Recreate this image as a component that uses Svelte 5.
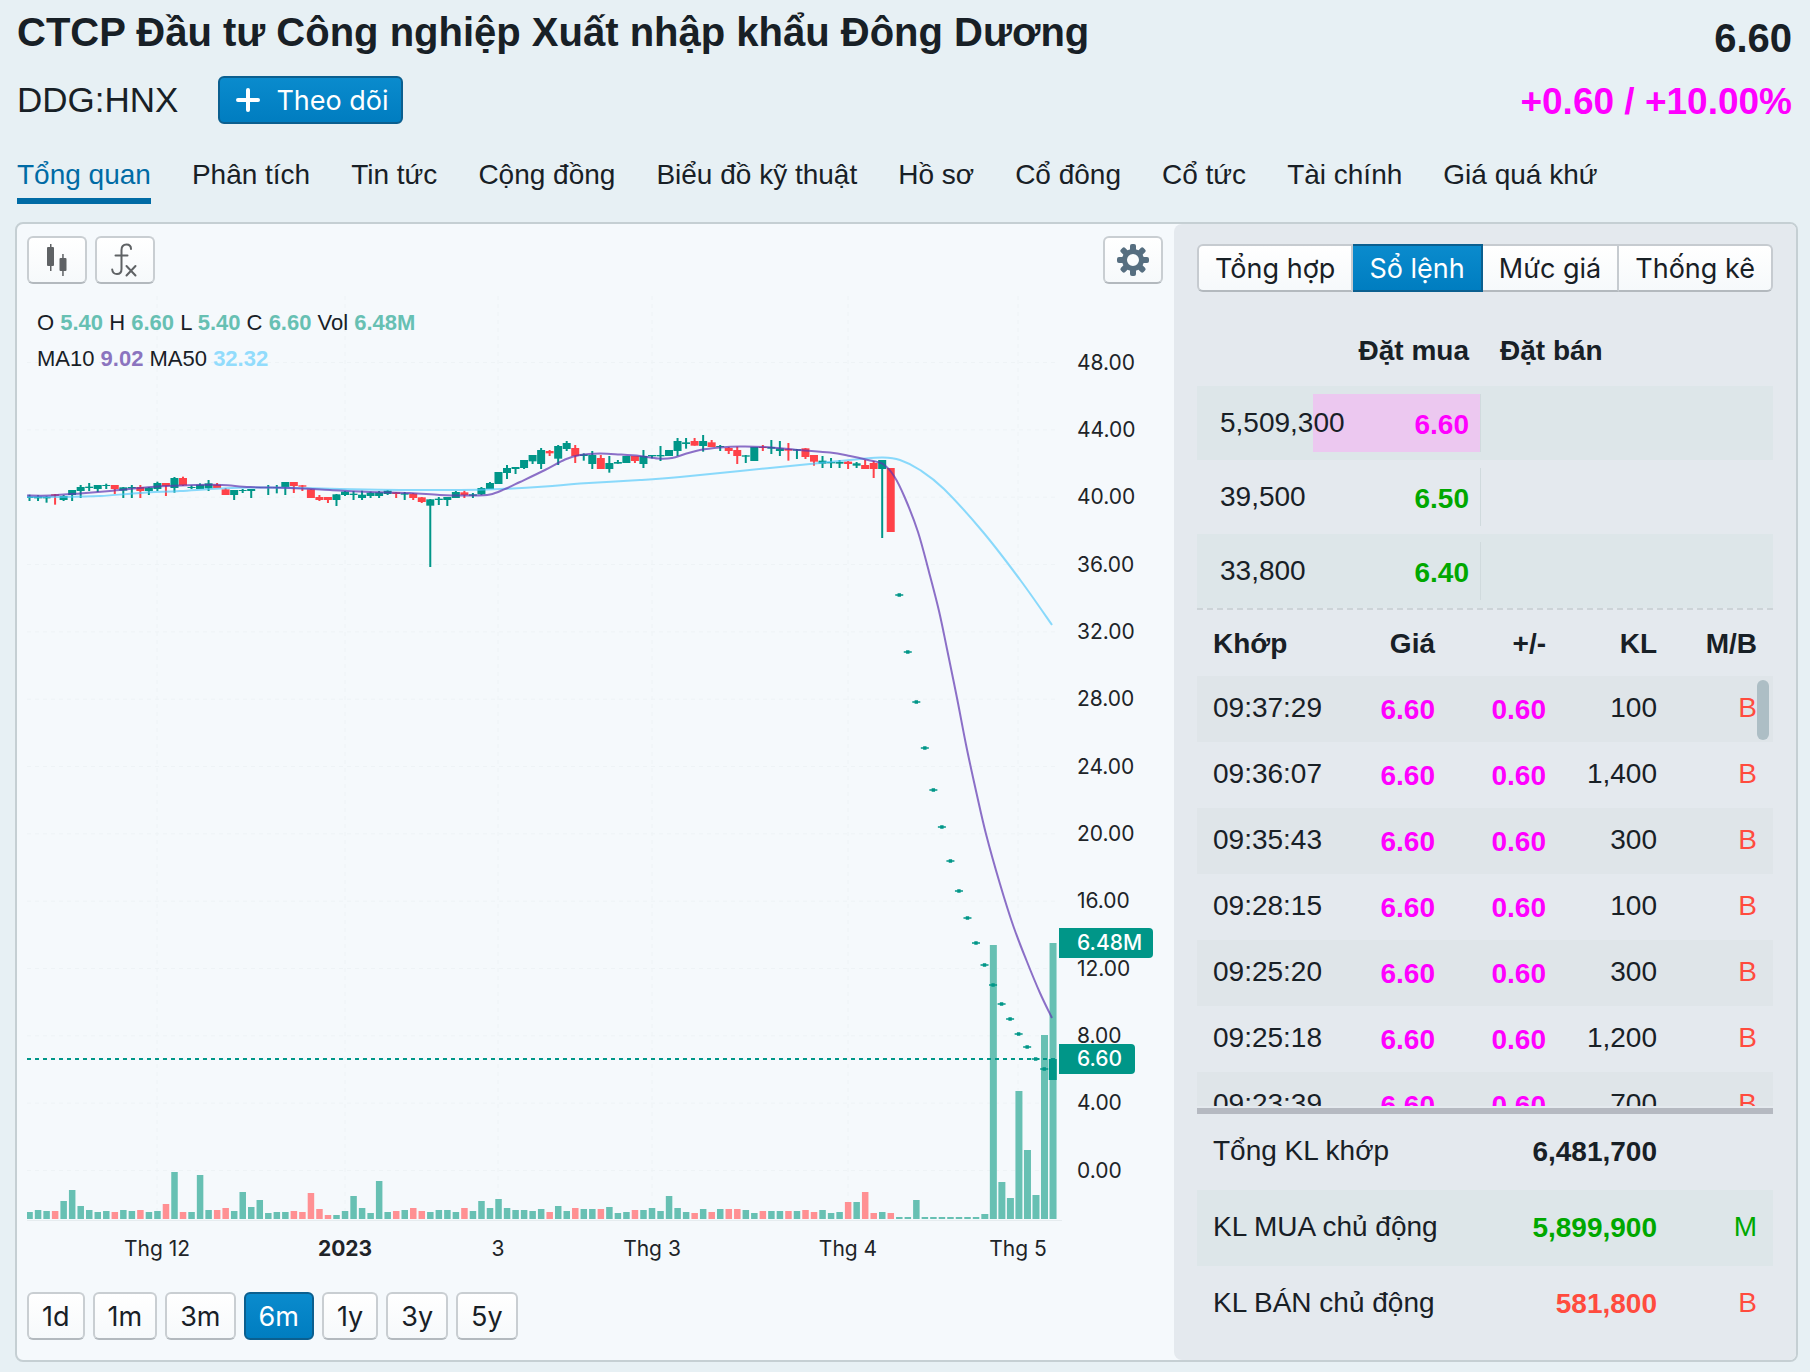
<script>
  const tabs = ['Tổng quan', 'Phân tích', 'Tin tức', 'Cộng đồng', 'Biểu đồ kỹ thuật', 'Hồ sơ', 'Cổ đông', 'Cổ tức', 'Tài chính', 'Giá quá khứ'];
  const periods = ['1d', '1m', '3m', '6m', '1y', '3y', '5y'];
  const views = ['Tổng hợp', 'Sổ lệnh', 'Mức giá', 'Thống kê'];

  let activeTab = $state('Tổng quan');
  let activePeriod = $state('6m');
  let activeView = $state('Sổ lệnh');

  const bids = [
    { volume: '5,509,300', price: '6.60', tone: 'ceil', share: 59 },
    { volume: '39,500', price: '6.50', tone: 'up', share: 0 },
    { volume: '33,800', price: '6.40', tone: 'up', share: 0 }
  ];

  const trades = [
    ['09:37:29', '100'],
    ['09:36:07', '1,400'],
    ['09:35:43', '300'],
    ['09:28:15', '100'],
    ['09:25:20', '300'],
    ['09:25:18', '1,200'],
    ['09:23:39', '700']
  ];

  const totals = [
    { label: 'Tổng KL khớp', value: '6,481,700', side: '', tone: '' },
    { label: 'KL MUA chủ động', value: '5,899,900', side: 'M', tone: 'up' },
    { label: 'KL BÁN chủ động', value: '581,800', side: 'B', tone: 'down' }
  ];

  // Chart geometry: one session every `step` units, starting at `x0`.
  const x0 = 29.5;
  const step = 8.527;
  const cx = (i) => x0 + i * step;
  const yOf = (price) => 1170.5 - price * 16.833;

  const priceTicks = [48, 44, 40, 36, 32, 28, 24, 20, 16, 12, 8, 4, 0];
  const timeTicks = [
    { x: 157, label: 'Thg 12' },
    { x: 345, label: '2023', strong: true },
    { x: 498, label: '3' },
    { x: 652, label: 'Thg 3' },
    { x: 848, label: 'Thg 4' },
    { x: 1018, label: 'Thg 5' }
  ];

  // Sessions that closed lower; all the others closed higher.
  const falling = new Set([3, 10, 13, 16, 18, 22, 23, 31, 32, 33, 34, 35, 43, 45, 46, 51, 61, 64, 67, 71, 78, 80, 82, 83, 86, 89, 91, 92, 96, 98, 99, 101]);

  const volumes = [
    7, 9, 8, 8, 18, 29, 13, 9, 7, 8, 7, 9, 8, 9, 7, 8, 15, 47, 7, 7, 44, 9, 9, 11, 8, 27, 12, 19, 6, 7, 7, 8, 7, 26, 10, 4, 4, 8, 23, 11,
    6, 38, 7, 8, 9, 11, 8, 7, 9, 9, 7, 11, 8, 18, 11, 20, 11, 9, 9, 8, 10, 7, 13, 8, 11, 10, 10, 10, 12, 6, 7, 9, 9, 11, 8, 23, 11, 7, 6, 10,
    7, 10, 10, 10, 9, 6, 8, 8, 8, 8, 8, 9, 7, 9, 6, 7, 17, 17, 27, 6, 7, 6, 2, 2, 19, 2, 2, 2, 2, 2, 2, 2, 5, 274, 37, 21, 128, 69, 24, 184, 276
  ];

  // Wick top, body top, body bottom, wick bottom, in thirds of a unit below y = 440.
  const sessions = [
    [164, 170, 174, 183], [166, 170, 175, 183], [168, 171, 175, 188], [162, 163, 167, 194], [165, 168, 180, 183],
    [150, 150, 165, 183], [135, 141, 153, 174], [129, 140, 144, 153], [135, 135, 147, 156], [131, 135, 138, 147],
    [135, 135, 147, 162], [141, 142, 152, 174], [135, 141, 145, 174], [135, 141, 153, 174], [141, 143, 153, 165],
    [125, 129, 147, 153], [129, 129, 138, 168], [111, 114, 144, 158], [110, 114, 136, 138], [136, 141, 144, 147],
    [130, 134, 147, 147], [120, 130, 145, 153], [129, 134, 144, 144], [144, 148, 165, 165], [150, 150, 165, 180],
    [147, 150, 153, 159], [147, 147, 153, 174], [141, 142, 144, 144], [135, 142, 144, 165], [135, 141, 144, 160],
    [126, 126, 141, 165], [126, 126, 138, 159], [135, 136, 140, 153], [147, 148, 174, 174], [165, 171, 180, 183],
    [171, 171, 180, 189], [162, 163, 180, 198], [153, 155, 165, 168], [153, 161, 165, 180], [152, 164, 174, 180],
    [155, 158, 168, 174], [153, 157, 168, 174], [150, 152, 162, 165], [156, 157, 162, 174], [156, 160, 164, 180],
    [159, 161, 174, 180], [171, 172, 186, 189], [177, 178, 197, 381], [171, 176, 180, 195], [171, 171, 180, 198],
    [153, 156, 174, 174], [152, 157, 165, 174], [159, 163, 167, 174], [141, 144, 163, 165], [126, 129, 147, 147],
    [96, 96, 132, 132], [75, 84, 99, 117], [81, 81, 87, 102], [60, 60, 84, 87], [45, 45, 64, 72],
    [24, 30, 72, 87], [30, 33, 40, 48], [15, 18, 56, 75], [3, 9, 27, 33], [15, 24, 48, 69],
    [40, 43, 48, 62], [33, 45, 72, 87], [45, 54, 87, 87], [48, 69, 87, 98], [60, 66, 71, 71],
    [48, 48, 69, 69], [48, 48, 63, 69], [30, 48, 72, 84], [45, 45, 49, 55], [18, 45, 49, 63],
    [30, 30, 48, 48], [-6, 3, 33, 48], [-6, 7, 12, 26], [-6, 3, 17, 17], [-15, 3, 18, 35],
    [0, 7, 21, 21], [15, 18, 21, 33], [21, 24, 33, 42], [20, 30, 48, 72], [45, 46, 50, 69],
    [21, 21, 63, 63], [15, 21, 24, 33], [0, 21, 26, 42], [3, 25, 33, 48], [9, 27, 32, 62],
    [27, 28, 32, 57], [24, 25, 51, 57], [45, 45, 65, 77], [48, 62, 71, 84], [54, 66, 70, 84],
    [60, 66, 71, 84], [63, 65, 72, 87], [66, 70, 77, 84], [60, 75, 87, 87], [63, 69, 87, 114],
    [60, 60, 87, 294], [84, 84, 276, 276]
  ];

  // Limit-move sessions with a single traded price, starting at session 102.
  const flats = [595, 652, 702, 748, 790, 827, 861, 891, 918, 943, 965, 985, 1004, 1019, 1034, 1047, 1059, 1069];

  const candles = sessions.map(([wt, bt, bb, wb], i) => ({
    x: cx(i), wt: 440 + wt / 3, bt: 440 + bt / 3, bb: 440 + bb / 3, wb: 440 + wb / 3, down: falling.has(i)
  }));

  const ma10 = [[27, 495.5], [50, 495.5], [80, 493.5], [110, 491], [140, 488], [167, 486], [195, 485], [222, 485], [250, 487], [290, 488], [330, 490], [370, 492], [410, 493], [440, 495], [470, 495.5], [490, 494.5], [505, 489], [520, 482], [545, 470], [565, 459.5], [580, 455], [600, 453.5], [620, 454.5], [640, 456], [658, 458.5], [672, 458], [685, 454], [700, 450], [720, 447.5], [740, 446.5], [765, 447], [800, 450], [830, 452.5], [850, 456], [868, 460], [883, 464], [894, 476], [905, 498], [918, 532], [929, 572], [939, 611], [947, 649], [957, 698], [966.7, 748], [976.7, 794], [986, 834], [1000, 884], [1013.3, 926], [1026.7, 961], [1040, 993], [1052, 1018]];
  const ma50 = [[27, 497], [60, 497], [100, 496], [140, 493], [180, 491], [220, 488.5], [260, 487.5], [300, 488], [340, 489], [400, 490], [460, 490], [500, 489], [545, 486.5], [580, 483.5], [640, 480], [680, 477], [740, 471], [780, 467], [820, 463], [860, 459], [883, 457.5], [900, 460], [920, 470], [944, 489], [983, 532], [1021, 581], [1052, 625]];

  // Catmull-Rom spline through the given points.
  function smooth(points) {
    let d = `M${points[0][0]} ${points[0][1]}`;
    for (let i = 0; i < points.length - 1; i++) {
      const a = points[i - 1] ?? points[i];
      const b = points[i];
      const c = points[i + 1];
      const e = points[i + 2] ?? c;
      d += ` C${b[0] + (c[0] - a[0]) / 6} ${b[1] + (c[1] - a[1]) / 6} ${c[0] - (e[0] - b[0]) / 6} ${c[1] - (e[1] - b[1]) / 6} ${c[0]} ${c[1]}`;
    }
    return d;
  }
</script>

<div class="page">
  <header class="head">
    <div>
      <h1>CTCP Đầu tư Công nghiệp Xuất nhập khẩu Đông Dương</h1>
      <div class="ticker-row">
        <span class="ticker">DDG:HNX</span>
        <button class="btn primary follow" type="button">
          <svg viewBox="0 0 24 24" width="24" height="24" aria-hidden="true"><path d="M12 2v20M2 12h20" /></svg>
          Theo dõi
        </button>
      </div>
    </div>
    <div class="quote">
      <div class="last">6.60</div>
      <div class="change">+0.60 / +10.00%</div>
    </div>
  </header>

  <nav class="tabs">
    {#each tabs as tab}
      <a href="#{tab}" class:active={tab === activeTab} onclick={() => (activeTab = tab)}>{tab}</a>
    {/each}
  </nav>

  <main class="panel">
    <section class="chart">
      <div class="toolbar">
        <button class="btn tool" type="button" aria-label="Kiểu biểu đồ">
          <svg viewBox="0 0 32 36" width="32" height="36" aria-hidden="true">
            <g fill="#5f6265">
              <rect x="6" y="5" width="7" height="19" rx="1" /><rect x="9" y="2" width="1.5" height="27" />
              <rect x="18.500" y="16" width="7" height="13" rx="1" /><rect x="21.200" y="12" width="1.500" height="22" />
            </g>
          </svg>
        </button>
        <button class="btn tool" type="button" aria-label="Chỉ báo">
          <svg viewBox="0 0 32 36" width="32" height="36" aria-hidden="true">
            <g fill="none" stroke="#5f6265" stroke-width="2" stroke-linecap="round">
              <path d="M22 7C22 4 20.500 2.500 17.500 2.500C14 2.500 12.500 5 12.500 8V27C12.500 30.500 11 32 8 32C5 32 3.500 30.500 3.200 27.500" />
              <path d="M6.500 13.500H18.500M17.500 24L26.500 33.500M26.500 24L17.500 33.500" />
            </g>
          </svg>
        </button>
        <button class="btn tool settings" type="button" aria-label="Cài đặt">
          <svg viewBox="-18 -18 36 36" width="36" height="36" aria-hidden="true">
            <g fill="#566e80">
              {#each [0, 45, 90, 135] as angle}
                <rect x="-3" y="-16" width="6" height="9" rx="2" transform="rotate({angle})" />
                <rect x="-3" y="7" width="6" height="9" rx="2" transform="rotate({angle})" />
              {/each}
            </g>
            <circle r="8.500" fill="none" stroke="#566e80" stroke-width="5" />
          </svg>
        </button>
      </div>

      <div class="plot">
        <svg class="graph" viewBox="27 292 1147 984" role="img" aria-label="Biểu đồ giá DDG">
          <g class="grid">
            {#each priceTicks as tick}
              <path d="M27 {yOf(tick)}H1058" />
            {/each}
            {#each timeTicks as tick}
              <path d="M{tick.x} 296V1219" />
            {/each}
          </g>
          <path d="M27 1220.500H1062" stroke="#e6ecef" />

          {#each volumes as height, i}
            <rect x={cx(i) - 3.2} y={1219 - height} width={i > 111 ? 7 : 6.5} {height} class={falling.has(i) ? 'vol-down' : 'vol-up'} />
          {/each}

          {#each candles as c}
            <g class={c.down ? 'fall' : 'rise'}>
              <rect x={c.x - 1} y={c.wt} width="2" height={c.wb - c.wt} />
              <rect x={c.x - 4} y={c.bt} width="8" height={c.bb - c.bt} />
            </g>
          {/each}
          {#each flats as y, i}
            <path class="rise" d="M{cx(102 + i) - 4} {y - 0.7}h2.300v-1h3.400v1h2.300v1.400h-2.300v1h-3.400v-1h-2.300z" />
          {/each}
          <rect class="rise" x={cx(120) - 4} y="1059" width="8" height="21" />

          <path class="ma ma50" d={smooth(ma50)} />
          <path class="ma ma10" d={smooth(ma10)} />
          <path d="M27 1059H1059" stroke="#009688" stroke-width="2" stroke-dasharray="4 4" />

          <g class="axis">
            {#each priceTicks as tick}
              <text x="1077" y={yOf(tick) + 7}>{tick.toFixed(2)}</text>
            {/each}
            {#each timeTicks as tick}
              <text x={tick.x} y="1256" text-anchor="middle" class:strong={tick.strong}>{tick.label}</text>
            {/each}
          </g>
          <g class="tag">
            <path d="M1059 928h90a4 4 0 0 1 4 4v22a4 4 0 0 1-4 4h-90z" />
            <text x="1077" y="950">6.48M</text>
            <path d="M1059 1044h72a4 4 0 0 1 4 4v22a4 4 0 0 1-4 4h-72z" />
            <text x="1077" y="1066">6.60</text>
          </g>
        </svg>
        <div class="legend">
          <div>O <b>5.40</b> H <b>6.60</b> L <b>5.40</b> C <b>6.60</b> Vol <b>6.48M</b></div>
          <div>MA10 <b class="l10">9.02</b> MA50 <b class="l50">32.32</b></div>
        </div>
      </div>

      <div class="periods">
        {#each periods as period}
          <button type="button" class="btn period" class:primary={period === activePeriod} onclick={() => (activePeriod = period)}>{period}</button>
        {/each}
      </div>
    </section>

    <aside class="side">
      <div class="segments">
        {#each views as view}
          <button type="button" class:active={view === activeView} onclick={() => (activeView = view)}>{view}</button>
        {/each}
      </div>

      <div class="book-head"><span>Đặt mua</span><span>Đặt bán</span></div>
      <div class="book">
        {#each bids as bid}
          <div class="book-row">
            <div class="bid">
              {#if bid.share}<i class="depth" style="width: {bid.share}%"></i>{/if}
              <span>{bid.volume}</span>
              <b class="num {bid.tone}">{bid.price}</b>
            </div>
          </div>
        {/each}
      </div>

      <div class="trades">
        <table>
          <thead>
            <tr><th>Khớp</th><th>Giá</th><th>+/-</th><th>KL</th><th>M/B</th></tr>
          </thead>
          <tbody>
            {#each trades as [time, volume]}
              <tr>
                <td>{time}</td>
                <td class="num ceil">6.60</td>
                <td class="num ceil">0.60</td>
                <td>{volume}</td>
                <td class="down">B</td>
              </tr>
            {/each}
          </tbody>
        </table>
        <span class="thumb"></span>
      </div>

      <table class="totals">
        <tbody>
          {#each totals as row}
            <tr>
              <td>{row.label}</td>
              <td class="num {row.tone}">{row.value}</td>
              <td class={row.tone}>{row.side}</td>
            </tr>
          {/each}
        </tbody>
      </table>
    </aside>
  </main>
</div>

<style>
  :global(body) {
    margin: 0;
    background: #e7f0f4;
  }

  .page {
    box-sizing: border-box;
    padding: 0 12px 10px 15px;
    font-family: 'Liberation Sans', Arial, sans-serif;
    font-size: 28px;
    color: #182026;
  }

  .head {
    display: flex;
    justify-content: space-between;
    padding: 0 6px 0 2px;
  }

  h1 {
    margin: 0;
    font-size: 40px;
    line-height: 64px;
  }

  .ticker-row {
    display: flex;
    align-items: center;
    gap: 40px;
    height: 72px;
  }

  .ticker {
    font-size: 35px;
  }

  .quote {
    text-align: right;
    font-weight: bold;
    white-space: nowrap;
  }

  .last {
    font-size: 40px;
    line-height: 76px;
  }

  .change {
    font-size: 37px;
    line-height: 52px;
    color: #ff00ff;
  }

  .btn {
    box-sizing: border-box;
    display: inline-flex;
    align-items: center;
    justify-content: center;
    height: 48px;
    margin: 0;
    padding: 0;
    border: 2px solid #c9ced2;
    border-bottom-color: #b3b9be;
    border-radius: 6px;
    background: linear-gradient(#ffffff, #f6f9fb);
    color: #182026;
    font-family: Inter, sans-serif;
    font-size: 27px;
  }

  .primary {
    border-color: #0b5f8f;
    background: linear-gradient(#0a8bcd, #007dc0);
    color: #ffffff;
  }

  .follow {
    gap: 16px;
    padding: 0 12px 0 16px;
  }

  .follow path {
    fill: none;
    stroke: #ffffff;
    stroke-width: 4;
    stroke-linecap: round;
  }

  .tabs {
    display: flex;
    gap: 41px;
    padding: 17px 2px 18px;
  }

  .tabs a {
    padding-bottom: 1px;
    border-bottom: 6px solid transparent;
    color: inherit;
    line-height: 44px;
    text-decoration: none;
    white-space: nowrap;
  }

  .tabs .active {
    border-color: #006ba5;
    color: #006ba5;
  }

  .panel {
    display: grid;
    grid-template-columns: minmax(0, 1157fr) minmax(0, 622fr);
    border: 2px solid #c5cfd3;
    border-radius: 8px;
    background: #f5f9fc;
  }

  .chart {
    padding: 12px 0 20px 10px;
  }

  .toolbar {
    display: flex;
    gap: 8px;
    padding-right: 11px;
  }

  .tool {
    width: 60px;
  }

  .settings {
    margin-left: auto;
  }

  .plot {
    display: grid;
    margin: 8px 0 16px;
  }

  .graph {
    grid-area: 1 / 1;
    display: block;
    width: 100%;
    height: auto;
  }

  .legend {
    grid-area: 1 / 1;
    padding: 13px 0 0 10px;
    font-size: 22px;
    line-height: 36px;
  }

  .legend b {
    color: #67c0b3;
  }

  .legend .l10 {
    color: #8b74bf;
  }

  .legend .l50 {
    color: #92dcfc;
  }

  .grid path {
    stroke: #eef3f6;
    stroke-dasharray: 4 4;
  }

  .vol-up {
    fill: #67c0b3;
  }

  .vol-down {
    fill: #ff9093;
  }

  .rise {
    fill: #009688;
  }

  .fall {
    fill: #ff4249;
  }

  .ma {
    fill: none;
    stroke-width: 2;
  }

  .ma10 {
    stroke: #5e35b1;
    stroke-opacity: 0.7;
  }

  .ma50 {
    stroke: #4fc8fb;
    stroke-opacity: 0.65;
  }

  .axis,
  .tag {
    font-family: Inter, sans-serif;
    font-size: 21px;
    fill: #202428;
  }

  .axis .strong {
    font-weight: bold;
  }

  .tag path {
    fill: #009688;
  }

  .tag text {
    fill: #ffffff;
    font-weight: 500;
  }

  .periods {
    display: flex;
    gap: 8px;
  }

  .period {
    padding: 0 13px;
  }

  .side {
    padding: 20px 23px 18px;
    border-radius: 8px 6px 6px 8px;
    background: #e4e9ee;
  }

  .segments {
    display: flex;
    height: 48px;
  }

  .segments button {
    box-sizing: border-box;
    flex: 1 1 auto;
    margin: 0;
    padding: 0;
    border: 2px solid #c6cbd0;
    border-bottom-color: #b3b9be;
    border-left-width: 0;
    background: linear-gradient(#ffffff, #f6f9fb);
    color: #182026;
    font-family: Inter, sans-serif;
    font-size: 27px;
    white-space: nowrap;
  }

  .segments button:first-child {
    border-left-width: 2px;
    border-radius: 6px 0 0 6px;
  }

  .segments button:last-child {
    border-radius: 0 6px 6px 0;
  }

  .segments .active {
    border-color: #0b5f8f;
    background: linear-gradient(#0a8bcd, #007dc0);
    color: #ffffff;
  }

  .book-head {
    display: grid;
    grid-template-columns: 284fr 292fr;
    padding: 34px 0 10px;
    font-weight: bold;
    line-height: 50px;
  }

  .book-head span:first-child {
    padding-right: 12px;
    text-align: right;
  }

  .book-head span:last-child {
    padding-left: 19px;
  }

  .book {
    border-bottom: 2px dashed #ccd3d7;
  }

  .book-row {
    display: grid;
    grid-template-columns: 284fr 292fr;
    height: 58px;
    padding: 8px 0;
  }

  .book-row:nth-child(odd) {
    background: #dde6e9;
  }

  .bid {
    position: relative;
    display: flex;
    justify-content: space-between;
    height: 58px;
    padding: 0 11px 0 23px;
    border-right: 1px solid #d0dadd;
    line-height: 58px;
  }

  .bid span,
  .bid b {
    position: relative;
  }

  .depth {
    position: absolute;
    top: 0;
    right: 0;
    bottom: 0;
    background: #ecc8f0;
  }

  .num {
    padding-top: 4px;
    font-weight: bold;
  }

  .bid .num {
    padding-top: 2px;
  }

  .ceil {
    color: #ff00ff;
  }

  .up {
    color: #00a800;
  }

  .down {
    color: #ff4b3e;
  }

  .trades {
    position: relative;
    height: 496px;
    margin-bottom: 2px;
    overflow: hidden;
  }

  table {
    width: 100%;
    border-collapse: collapse;
    table-layout: fixed;
  }

  th,
  td {
    height: 64px;
    padding: 2px 0 0;
    line-height: 32px;
    text-align: right;
  }

  td {
    padding: 0 0 2px;
  }

  th:nth-child(2) {
    width: 96px;
  }

  th:nth-child(3),
  th:nth-child(4) {
    width: 111px;
  }

  th:nth-child(5) {
    width: 100px;
  }

  th:first-child,
  td:first-child {
    padding-left: 16px;
    text-align: left;
  }

  th:last-child,
  td:last-child {
    padding-right: 16px;
  }

  .trades tbody tr:nth-child(odd) {
    background: #dfe5e9;
  }

  .trades td.num {
    height: 60px;
    padding-top: 4px;
  }

  .thumb {
    position: absolute;
    top: 70px;
    right: 4px;
    width: 12px;
    height: 60px;
    border-radius: 6px;
    background: #adbec5;
  }

  .totals {
    border-top: 6px solid #b5b9c1;
  }

  .totals td {
    height: 74px;
  }

  .totals td.num {
    width: 180px;
    height: 72px;
    padding-top: 2px;
  }

  .totals td:last-child {
    width: 100px;
  }

  .totals tr:nth-child(even) {
    background: #dde6e9;
  }
</style>
